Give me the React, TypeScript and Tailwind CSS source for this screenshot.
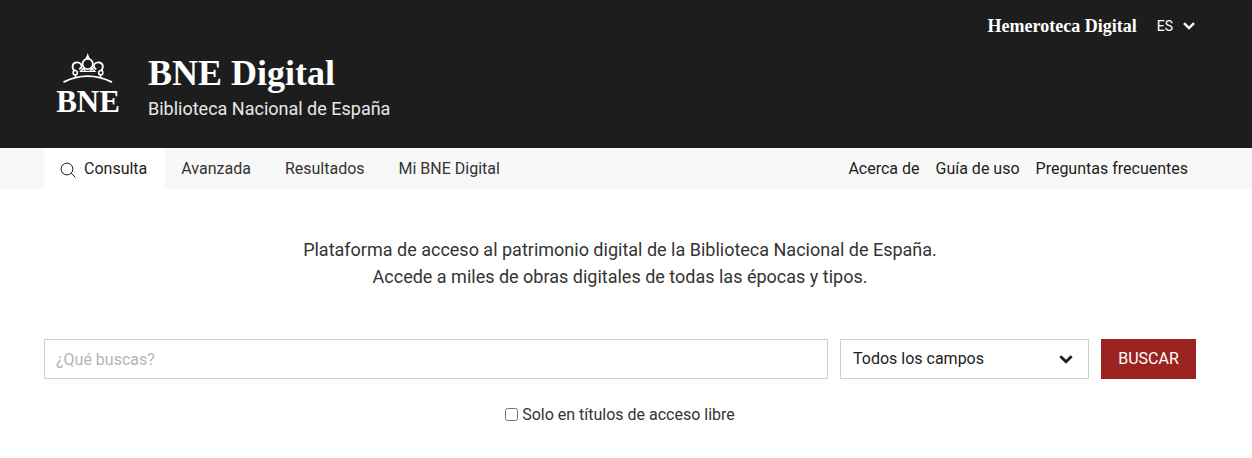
import React, { useState } from 'react';

const navItems = ['Avanzada', 'Resultados', 'Mi BNE Digital'];
const helpItems = ['Acerca de', 'Guía de uso', 'Preguntas frecuentes'];

const Chevron: React.FC<{ className?: string }> = ({ className }) => (
  <svg viewBox="0 0 12 8" className={className} fill="none" stroke="currentColor" strokeWidth="2.5" aria-hidden="true">
    <path d="M1 1.2 6 6.1 11 1.2" />
  </svg>
);

const Logo: React.FC = () => (
  <svg viewBox="0 0 68 70" className="h-[70px] w-[68px]" fill="none" stroke="#fff" role="img" aria-label="BNE">
    {/* Crown */}
    <path d="M7.500 29.200Q31.500 17 56 29.200" strokeWidth="1.900" />
    <circle cx="31.700" cy="11" r="5.200" strokeWidth="1.800" />
    <path d="M18.500 18C15 14 16.500 9.700 20.800 9.400c3.400-.2 5.200 2.200 4.600 5l-2.200 1.800M44.900 18C48.400 14 46.900 9.700 42.600 9.400c-3.400-.2-5.200 2.200-4.600 5l2.200 1.800" strokeWidth="1.800" />
    <path d="M24.500 18.300 27.500 15l1.800 3.300h4.800L35.900 15l3 3.300Z" strokeWidth="1.200" />
    <circle cx="19.200" cy="19.700" r="2.100" strokeWidth="1.500" />
    <circle cx="44.800" cy="19.700" r="2.100" strokeWidth="1.500" />
    <path d="M19.500 22v3M44.500 22v3" strokeWidth="1.500" />
    <path d="m31.700 0 1.100 3.200 1.500 2.600h-5.200l1.500-2.600Z" fill="#fff" stroke="none" />
    <text x="32" y="59" textAnchor="middle" fill="#fff" stroke="none" className="font-['Liberation_Serif',serif] text-[31px] font-bold">
      BNE
    </text>
  </svg>
);

const App: React.FC = () => {
  const [query, setQuery] = useState('');
  const [freeOnly, setFreeOnly] = useState(false);

  return (
    <div className="bg-white font-[Roboto,sans-serif] text-base text-[#333]">
      {/* Header */}
      <header className="bg-[#1d1d1d] pr-14 pl-11 text-white">
        <div className="flex h-[52px] items-center justify-end">
          <a href="#hemeroteca" className="font-['Liberation_Serif',serif] text-lg font-bold">Hemeroteca Digital</a>
          <button type="button" className="mr-px ml-5 flex items-center gap-2.5 text-sm">
            ES
            <Chevron className="h-2 w-3" />
          </button>
        </div>
        <div className="flex h-24 items-start pl-3">
          <a href="#inicio" className="mt-px">
            <Logo />
          </a>
          <div className="ml-6">
            <h1 className="font-['Liberation_Serif',serif] text-4xl leading-[43px] font-bold">BNE Digital</h1>
            <p className="text-lg leading-7 text-[#e8e8e8]">Biblioteca Nacional de España</p>
          </div>
        </div>
      </header>

      {/* Navigation */}
      <nav className="flex h-[41px] justify-between bg-[#f8f8f8] pr-14 pl-11">
        <div className="flex">
          <a href="#consulta" className="flex items-center gap-2 bg-white pr-[18px] pl-4 text-[#1d1d1d]">
            <svg viewBox="0 0 16 16" className="mt-0.5 h-4 w-4" fill="none" stroke="currentColor" strokeWidth="1" aria-hidden="true">
              <circle cx="7" cy="7" r="5.900" />
              <path d="m11.200 11.200 4.200 4.200" />
            </svg>
            Consulta
          </a>
          {navItems.map((item) => (
            <a key={item} href="#seccion" className="flex items-center pr-[18px] pl-4">{item}</a>
          ))}
        </div>
        <div className="flex">
          {helpItems.map((item) => (
            <a key={item} href="#ayuda" className="flex items-center px-2 text-[#1d1d1d]">{item}</a>
          ))}
        </div>
      </nav>

      {/* Search */}
      <main className="pt-[47px] pr-14 pb-8 pl-11">
        <p className="text-center text-lg leading-[27px]">
          Plataforma de acceso al patrimonio digital de la Biblioteca Nacional de España.
          <br />
          Accede a miles de obras digitales de todas las épocas y tipos.
        </p>
        <form className="mt-[49px]" onSubmit={(e) => e.preventDefault()}>
          <div className="flex gap-3">
            <input
              type="text"
              aria-label="Texto de búsqueda"
              placeholder="¿Qué buscas?"
              value={query}
              onChange={(e) => setQuery(e.target.value)}
              className="h-10 min-w-0 flex-1 border border-[#d0d0d0] px-[11px] placeholder:text-[#b5b5b5]"
            />
            <div className="relative w-[249px]">
              <select
                aria-label="Campo"
                className="h-10 w-full appearance-none border border-[#d0d0d0] bg-white pr-9 pl-3 text-[#1d1d1d]"
              >
                <option>Todos los campos</option>
                <option>Título</option>
                <option>Autor</option>
              </select>
              <Chevron className="pointer-events-none absolute top-4 right-4 h-[9px] w-[14px] text-[#1d1d1d]" />
            </div>
            <button type="submit" className="h-10 w-[95px] bg-[#9b2423] text-white">BUSCAR</button>
          </div>
          <label className="mt-6 flex items-center justify-center gap-1">
            <input type="checkbox" className="mb-0.5" checked={freeOnly} onChange={(e) => setFreeOnly(e.target.checked)} />
            Solo en títulos de acceso libre
          </label>
        </form>
      </main>
    </div>
  );
};

export default App;
